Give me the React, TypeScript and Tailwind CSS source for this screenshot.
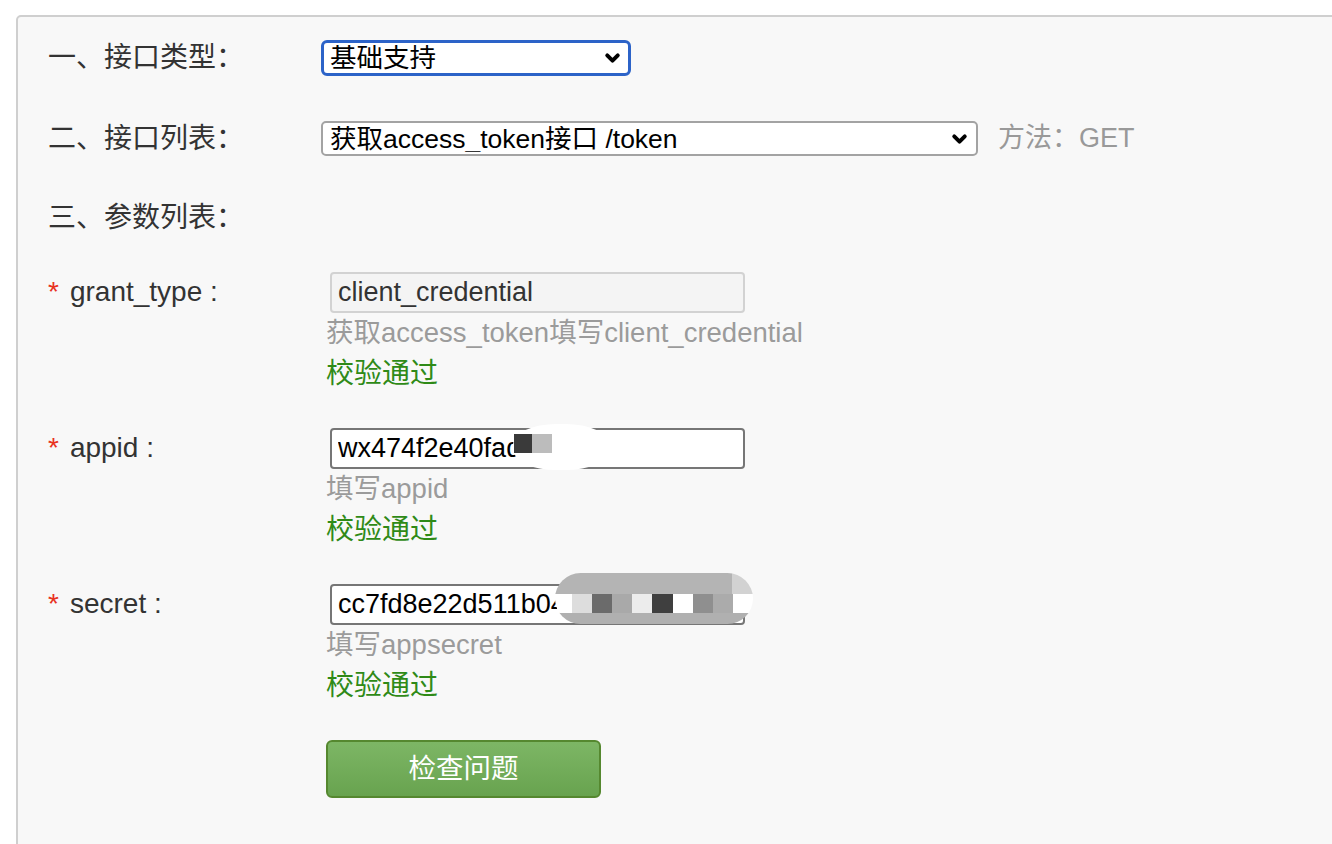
import { ChevronDown } from 'lucide-react'

const font = "[font-family:'Liberation_Sans','Noto_Sans_CJK_SC',sans-serif]"

interface Param {
  name: string
  value: string
  hint: string
  disabled?: boolean
  mask?: 'appid' | 'secret'
}

const params: Param[] = [
  {
    name: 'grant_type',
    value: 'client_credential',
    hint: '获取access_token填写client_credential',
    disabled: true,
  },
  { name: 'appid', value: 'wx474f2e40fad', hint: '填写appid', mask: 'appid' },
  { name: 'secret', value: 'cc7fd8e22d511b04', hint: '填写appsecret', mask: 'secret' },
]

// mosaic cells over the secret value
const secretCells = ['#dddddd', '#6b6b6b', '#a9a9a9', '#ececec', '#3f3f3f', '#ffffff', '#8f8f8f', '#ababab', '#ffffff']

function Select({ value, width, focused }: { value: string; width: string; focused?: boolean }) {
  return (
    <div className={`relative ${width}`}>
      <select
        defaultValue={value}
        className={`${font} w-full appearance-none bg-white text-black text-[26.5px] leading-none outline-none ${
          focused
            ? 'h-[36px] border-[3px] border-[#2c63c8] rounded-[6px] pl-[6px]'
            : 'h-[35px] border-[2px] border-[#a3a3a3] rounded-[5px] pl-[7px]'
        }`}
      >
        <option>{value}</option>
      </select>
      <ChevronDown
        className="absolute right-[8px] top-1/2 -translate-y-1/2 w-[21px] h-[21px] text-black pointer-events-none"
        strokeWidth={4.5}
      />
    </div>
  )
}

function Mask({ kind }: { kind: 'appid' | 'secret' }) {
  if (kind === 'appid') {
    return (
      <>
        <div className="absolute left-[183px] top-[-3px] w-[96px] h-[46px] bg-white rounded-[45%]" />
        <div className="absolute left-[184px] top-[7px] w-[18px] h-[19px] bg-[#3a3a3a]" />
        <div className="absolute left-[202px] top-[7px] w-[20px] h-[19px] bg-[#bcbcbc]" />
      </>
    )
  }
  return (
    <div className="absolute left-[225px] top-[-10px] w-[198px] h-[51px] rounded-full overflow-hidden flex flex-col">
      <div className="h-[21px] flex">
        <div className="flex-1 bg-[#b4b4b4]" />
        <div className="w-[21px] bg-[#d2d2d2]" />
      </div>
      <div className="h-[19px] flex">
        <div className="w-[17px] bg-white" />
        {secretCells.map((c, i) => (
          <div key={i} className="flex-1" style={{ backgroundColor: c }} />
        ))}
      </div>
      <div className="flex-1 bg-[#b0b0b0]" />
    </div>
  )
}

export default function App() {
  return (
    <div className={`${font} w-[1332px] h-[844px] overflow-hidden bg-white`}>
      <div className="ml-[16px] mt-[15px] w-[1340px] h-[860px] bg-[#f8f8f8] border-[2px] border-[#cfcfcf] rounded-tl-[5px] pl-[30px] pt-[23px] text-[28px] text-[#333]">
        <div className="flex items-center h-[36px]">
          <div className="w-[273px] shrink-0">一、接口类型：</div>
          <Select value="基础支持" width="w-[310px]" focused />
        </div>

        <div className="flex items-center h-[35px] mt-[45px]">
          <div className="w-[273px] shrink-0">二、接口列表：</div>
          <Select value="获取access_token接口 /token" width="w-[657px]" />
          <div className="ml-[20px] text-[#999] text-[27px]">方法：GET</div>
        </div>

        <div className="flex items-center h-[40px] mt-[42px]">三、参数列表：</div>

        <div className="mt-[33px] flex flex-col gap-[33px]">
          {params.map((p) => (
            <div key={p.name} className="flex">
              <div className="w-[273px] shrink-0 h-[41px] flex items-center">
                <span className="text-[#e8321e] mr-[11px]">*</span>
                <span>{p.name} :</span>
              </div>
              <div className="flex flex-col">
                <div className="relative ml-[9px] w-[415px] h-[41px]">
                  <input
                    readOnly
                    value={p.value}
                    className={`${font} w-full h-full rounded-[4px] border-[2px] px-[6px] text-[27px] outline-none ${
                      p.disabled
                        ? 'bg-[#f4f4f4] border-[#d2d2d2] text-[#333]'
                        : 'bg-white border-[#767676] text-black'
                    }`}
                  />
                  {p.mask && <Mask kind={p.mask} />}
                </div>
                <div className="ml-[5px] h-[41px] flex items-center text-[#9b9b9b] text-[27.5px]">{p.hint}</div>
                <div className="ml-[5px] h-[41px] flex items-center text-[#2f8a17]">校验通过</div>
              </div>
            </div>
          ))}
        </div>

        <button
          type="button"
          className={`${font} mt-[34px] ml-[278px] w-[275px] h-[58px] rounded-[6px] border-[2px] border-[#55882f] bg-gradient-to-b from-[#7db665] to-[#68a34f] text-white text-[27.5px]`}
        >
          检查问题
        </button>
      </div>
    </div>
  )
}
